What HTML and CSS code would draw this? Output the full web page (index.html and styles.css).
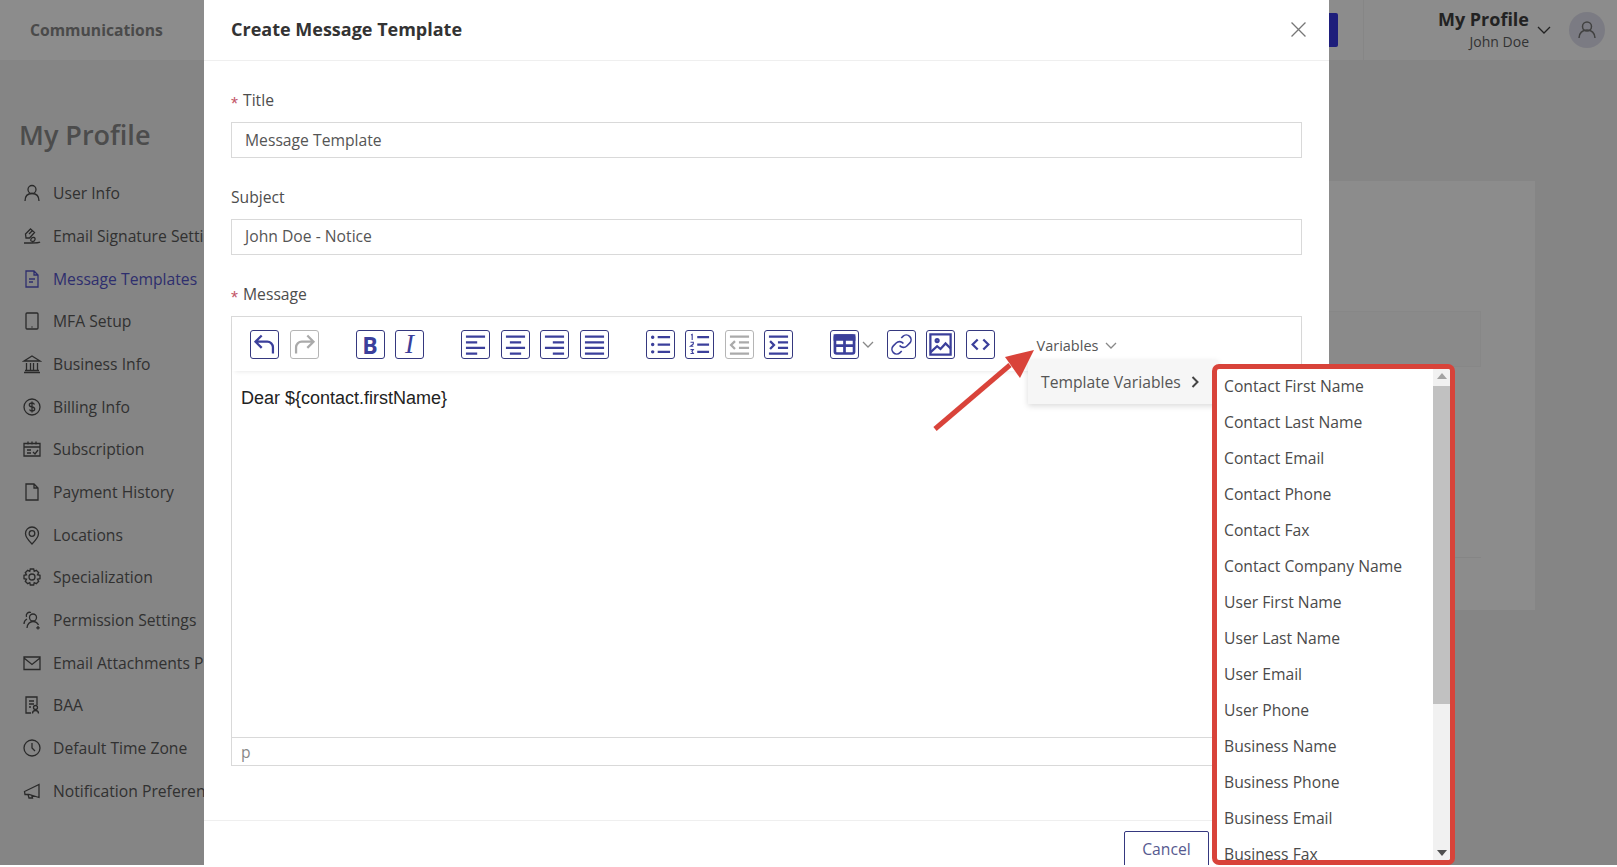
FILE: index.html
```html
<!DOCTYPE html>
<html lang="en">
<head>
<meta charset="utf-8">
<title>Create Message Template</title>
<link rel="stylesheet" href="styles.css">
</head>
<body>
<div class="page">
  <header class="topbar">
    <div class="brand">Communications</div>
    <div class="top-right">
      <div class="top-btn"></div>
      <div class="user">
        <div class="user-text"><div class="user-title">My Profile</div><div class="user-name">John Doe</div></div>
        <svg class="user-chev" viewBox="0 0 14 8"><path d="M1 1l6 6 6-6"/></svg>
      </div>
      <div class="avatar"><svg viewBox="0 0 20 20"><circle cx="10" cy="6.5" r="4.5"/><path d="M2 18c0-5 3.500-8 8-8s8 3 8 8"/></svg></div>
    </div>
  </header>
  <div class="content">
    <aside class="sidebar">
      <h1 class="side-title">My Profile</h1>
      <ul class="side-list">
        <li class="side-item"><svg viewBox="0 0 20 20"><circle cx="10" cy="6.500" r="4"/><path d="M3 18c0-5 3-7.500 7-7.500s7 2.500 7 7.500"/></svg>User Info</li>
        <li class="side-item"><svg viewBox="0 0 20 20"><path d="M4 12L3.500 8 8.500 3l4 3.500-5 5.500zM7 8l3-3"/><path d="M2 17h7c4 0 8 0 9-1M9 15c-1-2 1-4 3-3.500 2 .5 1 4-1 4s-2.500-1-2-.5"/></svg>Email Signature Settings</li>
        <li class="side-item active"><svg viewBox="0 0 20 20"><path d="M4 2h8l4 4v12H4zM12 2v4h4M7 10h6M7 13h4"/></svg>Message Templates</li>
        <li class="side-item"><svg viewBox="0 0 20 20"><rect x="4" y="2" width="12" height="16" rx="1"/><path d="M9.500 16h1"/></svg>MFA Setup</li>
        <li class="side-item"><svg viewBox="0 0 20 20"><path d="M10 2l8 5H2zM4.500 9v7M8.500 9v7M11.500 9v7M15.500 9v7M3 16.500h14M2 18.500h16"/></svg>Business Info</li>
        <li class="side-item"><svg viewBox="0 0 20 20"><circle cx="10" cy="10" r="8"/><path d="M12.500 7.500C12 6.500 11 6 10 6 8.500 6 7.300 6.800 7.300 8s1.200 1.800 2.700 2 2.700.8 2.700 2-1.200 2-2.700 2c-1 0-2-.5-2.500-1.500M10 4.500v11"/></svg>Billing Info</li>
        <li class="side-item"><svg viewBox="0 0 20 20"><path d="M2 4.500h16V17H2zM2 8h16M6 2.500v3M10 2.500v3M14 2.500v3M5 11h4M5 14h4M11 13l2 2 3-4"/></svg>Subscription</li>
        <li class="side-item"><svg viewBox="0 0 20 20"><path d="M4 2h8l4 4v12H4zM12 2v4h4"/></svg>Payment History</li>
        <li class="side-item"><svg viewBox="0 0 20 20"><path d="M10 19C5.500 14.500 3.500 11.500 3.500 8.500a6.500 6.500 0 0 1 13 0c0 3-2 6-6.500 10.500z"/><circle cx="10" cy="8.500" r="2.800"/></svg>Locations</li>
        <li class="side-item"><svg viewBox="0 0 20 20"><path d="M8.300 2h3.400l.5 2.300 2.100-1 2.400 2.400-1.200 2 2.500.6v3.400l-2.500.6 1.200 2-2.400 2.400-2.100-1-.5 2.300H8.300l-.5-2.300-2.100 1-2.400-2.400 1.200-2-2.500-.6V8.300l2.500-.6-1.200-2 2.400-2.400 2.100 1z"/><circle cx="10" cy="10" r="3"/></svg>Specialization</li>
        <li class="side-item"><svg viewBox="0 0 20 20"><circle cx="11" cy="7.500" r="3.500"/><path d="M5 18c0-4 3-6.500 6-6.500 2.500 0 4.500 1.500 5.500 3.500M9 2.500C6 1.500 3.500 4 4.500 7M2 14c0-2 1-4 3-5M16 16v3.500M14.200 17.800h3.600"/></svg>Permission Settings</li>
        <li class="side-item"><svg viewBox="0 0 20 20"><path d="M2 4h16v12.500H2zM2 5l8 6.500L18 5"/></svg>Email Attachments Preferences</li>
        <li class="side-item"><svg viewBox="0 0 20 20"><path d="M9 18H4V2h11v8M7 6h5M7 9h5M7 12h2"/><circle cx="13.500" cy="12.500" r="2"/><path d="M10.500 18.500c0-2 1.500-3 3-3s3 1 3 3"/></svg>BAA</li>
        <li class="side-item"><svg viewBox="0 0 20 20"><circle cx="10" cy="10" r="8"/><path d="M10 5v5l3 3"/></svg>Default Time Zone</li>
        <li class="side-item"><svg viewBox="0 0 20 20"><path d="M17 3.500v13L7 13.500H3l-.5-3zM6 13.500l1 3.500h3.500l-.8-2.600"/></svg>Notification Preferences</li>
      </ul>
    </aside>
    <main class="main">
      <section class="card">
        <div class="card-head"></div>
        <div class="card-line"></div>
      </section>
    </main>
  </div>

  <div class="overlay"></div>

  <div class="modal">
    <div class="modal-head">
      <span class="modal-title">Create Message Template</span>
      <svg class="modal-close" viewBox="0 0 14 14"><path d="M.5.500l13 13M13.500.500l-13 13"/></svg>
    </div>
    <div class="modal-body">
      <label class="field-label"><span class="req">*</span>Title</label>
      <div class="input">Message Template</div>
      <label class="field-label field-gap">Subject</label>
      <div class="input input-raised">John Doe - Notice</div>
      <label class="field-label field-gap"><span class="req">*</span>Message</label>
      <div class="editor">
        <div class="toolbar">
          <div class="tb-group">
            <span class="tb"><svg viewBox="0 0 24 24"><path d="M9.500 4L4 9.500l5.500 5.500M4 9.500h10.500a5 5 0 0 1 5 5V20"/></svg></span>
            <span class="tb off"><svg viewBox="0 0 24 24"><path d="M14.500 4L20 9.500 14.500 15M20 9.500H9.500a5 5 0 0 0-5 5V20"/></svg></span>
          </div>
          <div class="tb-group">
            <span class="tb tb-b">B</span>
            <span class="tb tb-i">I</span>
          </div>
          <div class="tb-group">
            <span class="tb"><svg viewBox="0 0 24 24"><path d="M3.500 5h17M3.500 10h10M3.500 15h17M3.500 20h10"/></svg></span>
            <span class="tb"><svg viewBox="0 0 24 24"><path d="M3.500 5h17M7 10h10M3.500 15h17M7 20h10"/></svg></span>
            <span class="tb"><svg viewBox="0 0 24 24"><path d="M3.500 5h17M10.500 10h10M3.500 15h17M10.500 20h10"/></svg></span>
            <span class="tb"><svg viewBox="0 0 24 24"><path d="M3.500 5h17M3.500 10h17M3.500 15h17M3.500 20h17"/></svg></span>
          </div>
          <div class="tb-group">
            <span class="tb"><svg viewBox="0 0 24 24"><path d="M9.500 5.500h11M9.500 12h11M9.500 18.500h11"/><path class="dots" d="M5 5.500h.1M5 12h.1M5 18.500h.1"/></svg></span>
            <span class="tb"><svg viewBox="0 0 24 24"><path d="M10 5.500h10.500M10 12h10.500M10 18.500h10.500"/><path class="thin" d="M4.500 3.500l1-.5v5M4 10h2.500v1.500L4 13.500h2.500M4 16.500h2.500l-1.200 1.700 1.200 1.800H4"/></svg></span>
            <span class="tb off"><svg viewBox="0 0 24 24"><path d="M3.500 5h17M11.500 10h9M11.500 15h9M3.500 20h17M8 9l-3.500 3.500L8 16"/></svg></span>
            <span class="tb"><svg viewBox="0 0 24 24"><path d="M3.500 5h17M11.500 10h9M11.500 15h9M3.500 20h17M4.500 9L8 12.500 4.500 16"/></svg></span>
          </div>
          <div class="tb-group tb-tight">
            <span class="tb"><svg class="heavy" viewBox="0 0 24 24"><rect x="3.500" y="4" width="17" height="16" rx="1.500"/><path class="fill" d="M3.500 4h17v3.500h-17z"/><path d="M12 7v13M3.500 13h17"/></svg></span>
            <svg class="chev" viewBox="0 0 12 7"><path d="M1 1l5 5 5-5"/></svg>
          </div>
          <div class="tb-group">
            <span class="tb"><svg class="lt" viewBox="0 0 24 24"><path d="M10 13a5 5 0 0 0 7.540.54l3-3a5 5 0 0 0-7.070-7.070l-1.720 1.710"/><path d="M14 11a5 5 0 0 0-7.540-.54l-3 3a5 5 0 0 0 7.070 7.070l1.710-1.710"/></svg></span>
            <span class="tb"><svg viewBox="0 0 24 24"><rect x="3" y="3" width="18" height="18"/><circle cx="9" cy="8.500" r="1.300"/><path d="M3 19l6-5.500 3 2.500 4.500-5 4.500 4.500"/></svg></span>
            <span class="tb"><svg viewBox="0 0 24 24"><path d="M9.500 7.500L5 12l4.500 4.500M14.500 7.500L19 12l-4.500 4.500"/></svg></span>
          </div>
          <div class="vars">Variables<svg class="chev" viewBox="0 0 12 7"><path d="M1 1l5 5 5-5"/></svg></div>
        </div>
        <div class="editor-area">Dear ${contact.firstName}</div>
        <div class="statusbar">p</div>
      </div>
    </div>
    <div class="modal-foot"><span class="btn-cancel">Cancel</span></div>
  </div>

  <div class="submenu">Template Variables<svg viewBox="0 0 8 12"><path d="M1.500 1l5 5-5 5"/></svg></div>

  <svg class="arrow" viewBox="0 0 110 90"><path class="arrow-line" d="M5 84L80 20"/><path class="arrow-head" d="M104 5L75 12 90 33z"/></svg>

  <div class="varbox">
    <ul class="var-list">
      <li>Contact First Name</li>
      <li>Contact Last Name</li>
      <li>Contact Email</li>
      <li>Contact Phone</li>
      <li>Contact Fax</li>
      <li>Contact Company Name</li>
      <li>User First Name</li>
      <li>User Last Name</li>
      <li>User Email</li>
      <li>User Phone</li>
      <li>Business Name</li>
      <li>Business Phone</li>
      <li>Business Email</li>
      <li>Business Fax</li>
    </ul>
    <div class="scrollbar">
      <span class="sb-up"></span>
      <span class="sb-thumb"></span>
      <span class="sb-down"></span>
    </div>
  </div>
</div>
</body>
</html>
```

FILE: styles.css
```css
* { box-sizing: border-box; }
html, body { margin: 0; padding: 0; background: #fff; }
body { font-family: "Open Sans", "Liberation Sans", sans-serif; font-size: 15.700px; color: #444; overflow: hidden; }
ul { list-style: none; margin: 0; padding: 0; }

.page { position: relative; width: 1617px; height: 865px; overflow: hidden; background: #f2f2f2; display: flex; flex-direction: column; }

.topbar { flex: none; height: 60px; background: #fff; display: flex; align-items: center; justify-content: space-between; }
.brand { padding-left: 30px; font-weight: 700; color: #888; }
.top-right { display: flex; align-items: center; height: 100%; }
.top-btn { width: 100px; height: 34px; margin-right: 25px; background: #3737e0; border-radius: 2px; }
.user { width: 206px; height: 100%; border-left: 1px solid #f5f5f5; display: flex; align-items: center; justify-content: flex-end; }
.user-text { text-align: right; margin-top: -2px; }
.user-title { font-size: 18px; font-weight: 700; line-height: 24px; color: #3e3e3e; margin-top: -1px; }
.user-name { font-size: 14px; line-height: 19px; margin-top: 1px; color: #5d5d5d; }
.user-chev { width: 14px; height: 8px; margin: 0 18px 0 8px; fill: none; stroke: #3e3e3e; stroke-width: 1.300; }
.avatar { width: 36px; height: 36px; margin-right: 12px; border-radius: 50%; background: #e1e1ee; display: flex; align-items: center; justify-content: center; }
.avatar svg { width: 20px; height: 20px; fill: none; stroke: #777; stroke-width: 1.500; }

.content { flex: 1; display: flex; min-height: 0; }
.sidebar { flex: none; width: 300px; padding: 56px 0 0 19px; }
.side-title { margin: 0 0 17.800px; font-size: 27px; line-height: 38px; font-weight: 600; color: #8a8a8a; }
.side-list { margin-left: 3px; }
.side-item { height: 42.700px; display: flex; align-items: center; gap: 11px; white-space: nowrap; color: #5a5a5a; }
.side-item svg { flex: none; width: 20px; height: 20px; fill: none; stroke: #4d4d4d; stroke-width: 1.300; }
.side-item.active { color: #5555c8; }
.side-item.active svg { stroke: #5555c8; }
.main { flex: 1; padding: 121px 82px 0 30px; }
.card { height: 429px; background: #fff; padding: 130px 54px 0 0; }
.card-head { height: 56px; background: #fbfbfb; border: 1px solid #f6f6f6; }
.card-line { margin-top: 190px; border-top: 1px solid #f2f2f2; }

.overlay { position: absolute; inset: 0; background: rgba(0, 0, 0, .45); }

.modal { position: absolute; left: 204px; top: 0; bottom: 0; width: 1125px; background: #fff; display: flex; flex-direction: column; overflow: hidden; }
.modal-head { flex: none; height: 61px; padding: 0 23px 2px 27px; border-bottom: 1px solid #efefef; display: flex; align-items: center; justify-content: space-between; }
.modal-title { font-size: 18px; font-weight: 700; color: #333; }
.modal-close { width: 15px; height: 15px; fill: none; stroke: #777; stroke-width: 1.200; }
.modal-body { flex: none; height: 759px; padding: 26px 27px 0; }
.field-label { display: block; height: 26px; line-height: 26px; color: #4d4d4d; }
.field-gap { margin-top: 26px; }
.req { display: inline-block; width: 12px; color: #c4586a; font-family: "Liberation Sans", sans-serif; font-size: 18px; vertical-align: -4px; line-height: 1; }
.input { height: 36px; margin-top: 9px; padding: 0 13px; border: 1px solid #d9d9d9; line-height: 34px; color: #555; }
.input-raised { line-height: 32px; }
.editor { height: 450px; margin-top: 9px; border: 1px solid #d9d9d9; display: flex; flex-direction: column; }
.toolbar { flex: none; height: 54px; padding: 13px 0 0 18px; display: flex; box-shadow: 0 3px 5px -3px rgba(0, 0, 0, .12); gap: 37px; }
.tb-group { display: flex; gap: 10.500px; }
.tb-tight { gap: 3px; margin-right: -24.500px; align-items: center; height: 29px; }
.tb { flex: none; width: 29px; height: 29px; border: 1px solid #35387f; border-radius: 3px; display: flex; align-items: center; justify-content: center; color: #3b3f9b; }
.tb svg { width: 27px; height: 27px; fill: none; stroke: #3b3f9b; stroke-width: 2; }
.tb svg.lt { width: 23px; height: 23px; stroke-width: 1.700; }
.tb svg.heavy { stroke-width: 2.400; }
.tb .thin { stroke-width: 1; }
.tb .dots { stroke-width: 3; stroke-linecap: round; }
.tb .fill { fill: #3b3f9b; }
.tb.off { border-color: #b5b5b5; }
.tb.off svg { stroke: #aaa; }
.tb-b { font-family: "Open Sans", sans-serif; font-size: 23px; font-weight: 700; }
.tb-i { font-family: "Liberation Serif", serif; font-size: 27px; font-style: italic; }
.chev { flex: none; width: 12px; height: 7px; fill: none; stroke: #888; stroke-width: 1.300; }
.vars { margin-left: 5px; height: 30px; display: flex; align-items: center; gap: 7px; font-size: 14.500px; color: #555; }
.editor-area { flex: 1; padding: 14px 9px; font-family: "Liberation Sans", Arial, sans-serif; font-size: 18px; line-height: 26px; color: #222; }
.statusbar { flex: none; height: 28px; padding: 0 9px; border-top: 1px solid #d9d9d9; line-height: 28px; color: #888; }
.modal-foot { flex: none; height: 50px; border-top: 1px solid #efefef; padding: 10px 120px 0 0; display: flex; justify-content: flex-end; }
.btn-cancel { width: 85px; height: 40px; border: 1px solid #35387f; border-radius: 2px; text-align: center; line-height: 34px; color: #56598f; }

.submenu { position: absolute; left: 1028px; top: 360px; width: 190px; height: 44px; padding: 0 13px; background: #f6f6f6; box-shadow: 0 2px 6px rgba(0, 0, 0, .15); display: flex; align-items: center; color: #555; }
.submenu svg { width: 8px; height: 12px; margin-left: 10px; fill: none; stroke: #444; stroke-width: 2; }

.arrow { position: absolute; left: 930px; top: 345px; width: 110px; height: 90px; }
.arrow-line { fill: none; stroke: #d9433a; stroke-width: 5; }
.arrow-head { fill: #d9433a; }

.varbox { position: absolute; left: 1212px; top: 364px; width: 243px; height: 501px; border: 5px solid #d8433a; border-radius: 7px; background: #fff; display: flex; overflow: hidden; }
.var-list { flex: 1; padding-left: 7px; margin-top: -1px; }
.var-list li { height: 36px; line-height: 36px; white-space: nowrap; color: #4a4a4a; }
.scrollbar { flex: none; width: 18px; background: #f1f1f1; position: relative; margin-right: -1px; }
.sb-up { position: absolute; left: 4px; top: 4px; border: 5px solid transparent; border-top: 0; border-bottom: 6px solid #a3a3a3; }
.sb-thumb { position: absolute; left: 0; right: 0; top: 17px; height: 318px; background: #c1c1c1; }
.sb-down { position: absolute; left: 4px; bottom: 4px; border: 5px solid transparent; border-bottom: 0; border-top: 6px solid #505050; }
```
